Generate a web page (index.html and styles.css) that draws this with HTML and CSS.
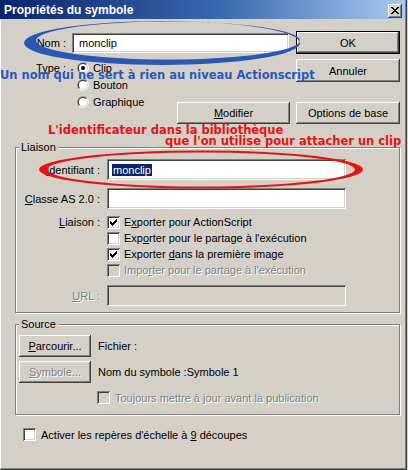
FILE: index.html
```html
<!DOCTYPE html>
<html lang="fr">
<head>
<meta charset="utf-8">
<title>Propriétés du symbole</title>
<link rel="stylesheet" href="styles.css">
</head>
<body>
<div class="window">
  <div class="titlebar">
    <span class="title">Propriétés du symbole</span>
    <span class="close">
      <svg width="14" height="14" viewBox="0 0 14 14" shape-rendering="crispEdges"><path fill="#000" d="M3 3h2v1h-2z M9 3h2v1h-2z M4 4h2v1h-2z M8 4h2v1h-2z M5 5h4v1h-4z M6 6h2v1h-2z M5 7h4v1h-4z M4 8h2v1h-2z M8 8h2v1h-2z M3 9h2v1h-2z M9 9h2v1h-2z"/></svg>
    </span>
  </div>

  <div class="top">
    <div class="top-left">
      <div class="row-nom">
        <span class="lbl lbl-top"><u>N</u>om :</span>
        <div class="input nom-input">monclip</div>
      </div>
      <div class="row-type">
        <span class="lbl lbl-top type-lbl">Type :</span>
        <div class="radios">
          <div class="radio-row">
            <svg class="radio" width="12" height="12" viewBox="0 0 12 12"><path d="M10.24 1.76A6 6 0 0 0 1.76 10.24Z" fill="#808080"/><path d="M10.24 1.76A6 6 0 0 1 1.76 10.24Z" fill="#fff"/><path d="M9.54 2.46A5 5 0 0 0 2.46 9.54Z" fill="#404040"/><path d="M9.54 2.46A5 5 0 0 1 2.46 9.54Z" fill="#d4d0c8"/><circle cx="6" cy="6" r="4" fill="#fff"/><circle cx="6" cy="6" r="2" fill="#000"/></svg>
            <span>Clip</span>
          </div>
          <div class="radio-row">
            <svg class="radio" width="12" height="12" viewBox="0 0 12 12"><path d="M10.24 1.76A6 6 0 0 0 1.76 10.24Z" fill="#808080"/><path d="M10.24 1.76A6 6 0 0 1 1.76 10.24Z" fill="#fff"/><path d="M9.54 2.46A5 5 0 0 0 2.46 9.54Z" fill="#404040"/><path d="M9.54 2.46A5 5 0 0 1 2.46 9.54Z" fill="#d4d0c8"/><circle cx="6" cy="6" r="4" fill="#fff"/></svg>
            <span>Bouton</span>
          </div>
          <div class="radio-row">
            <svg class="radio" width="12" height="12" viewBox="0 0 12 12"><path d="M10.24 1.76A6 6 0 0 0 1.76 10.24Z" fill="#808080"/><path d="M10.24 1.76A6 6 0 0 1 1.76 10.24Z" fill="#fff"/><path d="M9.54 2.46A5 5 0 0 0 2.46 9.54Z" fill="#404040"/><path d="M9.54 2.46A5 5 0 0 1 2.46 9.54Z" fill="#d4d0c8"/><circle cx="6" cy="6" r="4" fill="#fff"/></svg>
            <span>Graphique</span>
          </div>
        </div>
        <div class="btn btn-modifier"><span><u>M</u>odifier</span></div>
      </div>
    </div>
    <div class="top-right">
      <div class="btn btn-default btn-ok">OK</div>
      <div class="btn btn-annuler">Annuler</div>
      <div class="btn btn-options">Options de base</div>
    </div>
  </div>

  <div class="group liaison">
    <span class="legend">Liaison</span>
    <div class="field-row">
      <span class="flabel"><u>I</u>dentifiant :</span>
      <div class="input field-input"><span class="sel">monclip</span></div>
    </div>
    <div class="field-row row-classe">
      <span class="flabel"><u>C</u>lasse AS 2.0 :</span>
      <div class="input field-input"></div>
    </div>
    <div class="checks">
      <div class="check-row">
        <span class="flabel"><u>L</u>iaison :</span>
        <span class="cb"><svg width="13" height="13" viewBox="0 0 13 13" shape-rendering="crispEdges"><path fill="#000" d="M3 5h1v3h-1z M4 6h1v3h-1z M5 7h1v3h-1z M6 6h1v3h-1z M7 5h1v3h-1z M8 4h1v3h-1z M9 3h1v3h-1z"/></svg></span>
        <span class="ctext">E<u>x</u>porter pour ActionScript</span>
      </div>
      <div class="check-row">
        <span class="flabel"></span>
        <span class="cb"></span>
        <span class="ctext">Exp<u>o</u>rter pour le partage à l'exécution</span>
      </div>
      <div class="check-row">
        <span class="flabel"></span>
        <span class="cb"><svg width="13" height="13" viewBox="0 0 13 13" shape-rendering="crispEdges"><path fill="#000" d="M3 5h1v3h-1z M4 6h1v3h-1z M5 7h1v3h-1z M6 6h1v3h-1z M7 5h1v3h-1z M8 4h1v3h-1z M9 3h1v3h-1z"/></svg></span>
        <span class="ctext">Exporter <u>d</u>ans la première image</span>
      </div>
      <div class="check-row">
        <span class="flabel"></span>
        <span class="cb cb-disabled"></span>
        <span class="ctext disabled">Impo<u>r</u>ter pour le partage à l'exécution</span>
      </div>
    </div>
    <div class="field-row row-url">
      <span class="flabel disabled"><u>U</u>RL :</span>
      <div class="input field-input input-disabled"></div>
    </div>
  </div>

  <div class="group source">
    <span class="legend">Source</span>
    <div class="src-row">
      <div class="btn btn-src"><span><u>P</u>arcourir...</span></div>
      <span class="src-text">Fichier :</span>
    </div>
    <div class="src-row src-row2">
      <div class="btn btn-src disabled"><span><u>S</u>ymbole...</span></div>
      <span class="src-text">Nom du symbole :Symbole 1</span>
    </div>
    <div class="src-check">
      <span class="cb cb-disabled"></span>
      <span class="ctext disabled">Toujours mettre à <u>j</u>our avant la publication</span>
    </div>
  </div>

  <div class="bottom-check">
    <span class="cb"></span>
    <span class="ctext">Activer les repères d'échelle à <u>9</u> découpes</span>
  </div>

  <svg class="annot-shapes" width="408" height="470" viewBox="0 0 408 470">
    <path fill="#2a57b4" fill-rule="evenodd" d="M24 43a138 22 0 1 0 276 0a138 22 0 1 0 -276 0Z M36 40.5a132 19 0 1 0 264 0a132 19 0 1 0 -264 0Z"/>
    <path fill="#e41414" fill-rule="evenodd" d="M39 169.5a162 19 0 1 0 324 0a162 19 0 1 0 -324 0Z M47 169.5a154 17 0 1 0 308 0a154 17 0 1 0 -308 0Z"/>
  </svg>
  <div class="note note-blue">Un nom qui ne sert à rien au niveau Actionscript</div>
  <div class="note note-red1">L'identificateur dans la bibliothèque</div>
  <div class="note note-red2">que l'on utilise pour attacher un clip</div>
</div>
</body>
</html>
```

FILE: styles.css
```css
* { box-sizing: border-box; }

html, body {
  margin: 0;
  padding: 0;
  background: #d4d0c8;
}

body {
  font-family: "Liberation Sans", Arial, sans-serif;
  font-size: 11px;
  color: #000;
}

u { text-decoration: underline; text-underline-offset: 1px; }

.window {
  position: relative;
  width: 407px;
  height: 470px;
  background: #d4d0c8;
  box-shadow: inset -1px -1px #404040, inset 1px 0 #fff, inset -2px -2px #808080;
  overflow: hidden;
}

.titlebar {
  position: relative;
  z-index: 2;
  display: flex;
  width: 405px;
  height: 19px;
  background: linear-gradient(to right, #0a246a 0%, #3a6ab0 55%, #a6caf0 100%);
}

.title {
  flex: 1;
  color: #fff;
  font-weight: bold;
  font-size: 12px;
  line-height: 19px;
  padding-left: 4px;
  padding-top: 1px;
}

.close {
  width: 14px;
  height: 14px;
  margin: 4px 3px 0 0;
  background: #d4d0c8;
  box-shadow: inset -1px -1px #404040, inset 1px 1px #fff, inset -2px -2px #808080;
}
.close svg { display: block; }

/* buttons */
.btn {
  display: flex;
  align-items: center;
  justify-content: center;
  background: #d4d0c8;
  box-shadow: inset -1px -1px #404040, inset 1px 1px #fff, inset -2px -2px #808080;
  white-space: nowrap;
}
.btn-default {
  box-shadow: inset 0 0 0 1px #000, inset -2px -2px #404040, inset 2px 2px #fff, inset -3px -3px #808080;
}

/* inputs */
.input {
  display: flex;
  align-items: center;
  background: #fff;
  box-shadow: inset 1px 1px #808080, inset -1px -1px #fff, inset 2px 2px #404040, inset -2px -2px #d4d0c8;
  padding-left: 7px;
  white-space: nowrap;
}
.input-disabled { background: #d4d0c8; }

.disabled {
  color: #808080;
  text-shadow: 1px 1px 0 #fff;
}

/* checkbox */
.cb {
  display: block;
  flex: none;
  width: 13px;
  height: 13px;
  background: #fff;
  box-shadow: inset 1px 1px #808080, inset -1px -1px #fff, inset 2px 2px #404040, inset -2px -2px #d4d0c8;
}
.cb svg { display: block; }
.cb-disabled { background: #d4d0c8; }

/* top section */
.top {
  display: flex;
  margin-top: 12px;
}
.top-left {
  width: 290px;
}
.top-right {
  margin-left: 6px;
  width: 104px;
  display: flex;
  flex-direction: column;
}
.btn-ok { height: 23px; }
.btn-annuler { height: 23px; margin-top: 5px; }
.btn-options { height: 22px; margin-top: 20px; }

.row-nom {
  display: flex;
  align-items: center;
  height: 23px;
}
.lbl-top {
  width: 66px;
  text-align: right;
  flex: none;
}
.nom-input {
  margin-left: 6px;
  width: 217px;
  height: 20px;
}

.row-type {
  display: flex;
  margin-top: 8px;
}
.type-lbl {
  line-height: 13px;
}
.radios {
  margin-left: 11px;
  display: flex;
  flex-direction: column;
}
.radio-row {
  display: flex;
  align-items: center;
  height: 12px;
  margin-bottom: 5px;
}
.radio { display: block; flex: none; }
.radio-row span { margin-left: 4px; }

.btn-modifier {
  margin-left: auto;
  margin-top: 40px;
  width: 113px;
  height: 22px;
}

/* groups */
.group {
  position: relative;
  margin-left: 15px;
  width: 385px;
  border: 1px solid #808080;
  box-shadow: inset 1px 1px #fff, 1px 1px #fff;
}
.legend {
  position: absolute;
  top: -8px;
  left: 3px;
  padding: 0 2px;
  background: #d4d0c8;
  line-height: 14px;
}

.liaison {
  margin-top: 23px;
  padding-top: 11px;
  padding-bottom: 6px;
}
.field-row {
  display: flex;
  align-items: center;
  height: 21px;
}
.flabel {
  width: 84px;
  flex: none;
  text-align: right;
}
.field-input {
  margin-left: 7px;
  width: 239px;
  height: 21px;
  padding-left: 5px;
}
.sel {
  background: #0a246a;
  color: #fff;
  padding: 0 1px;
  line-height: 12px;
}
.row-classe { margin-top: 8px; }

.checks { margin-top: 5px; }
.check-row {
  display: flex;
  align-items: center;
  height: 16px;
}
.check-row .cb { margin-left: 7px; }
.ctext { margin-left: 4px; white-space: nowrap; }

.row-url { margin-top: 7px; }

.source {
  margin-top: 11px;
  padding-top: 10px;
  padding-bottom: 10px;
}
.src-row {
  display: flex;
  align-items: center;
}
.src-row2 { margin-top: 4px; }
.btn-src {
  margin-left: 3px;
  width: 72px;
  height: 22px;
}
.src-text { margin-left: 7px; }
.src-check {
  display: flex;
  align-items: center;
  margin-top: 8px;
  margin-left: 81px;
}
.src-check .ctext { margin-left: 5px; }

.bottom-check {
  display: flex;
  align-items: center;
  margin-top: 13px;
  margin-left: 23px;
}
.bottom-check .ctext { margin-left: 5px; }

/* annotations overlaid on the screenshot */
.annot-shapes {
  position: absolute;
  left: 0;
  top: 0;
  z-index: 1;
  pointer-events: none;
}
.note {
  position: absolute;
  z-index: 1;
  font-family: "DejaVu Sans", Verdana, sans-serif;
  font-weight: bold;
  font-size: 11.5px;
  line-height: 14px;
  white-space: nowrap;
}
.note-blue { color: #2a5ab8; left: 0; top: 68px; }
.note-red1 { color: #e41414; left: 48px; top: 123px; }
.note-red2 { color: #e41414; left: 165px; top: 134px; }
```
